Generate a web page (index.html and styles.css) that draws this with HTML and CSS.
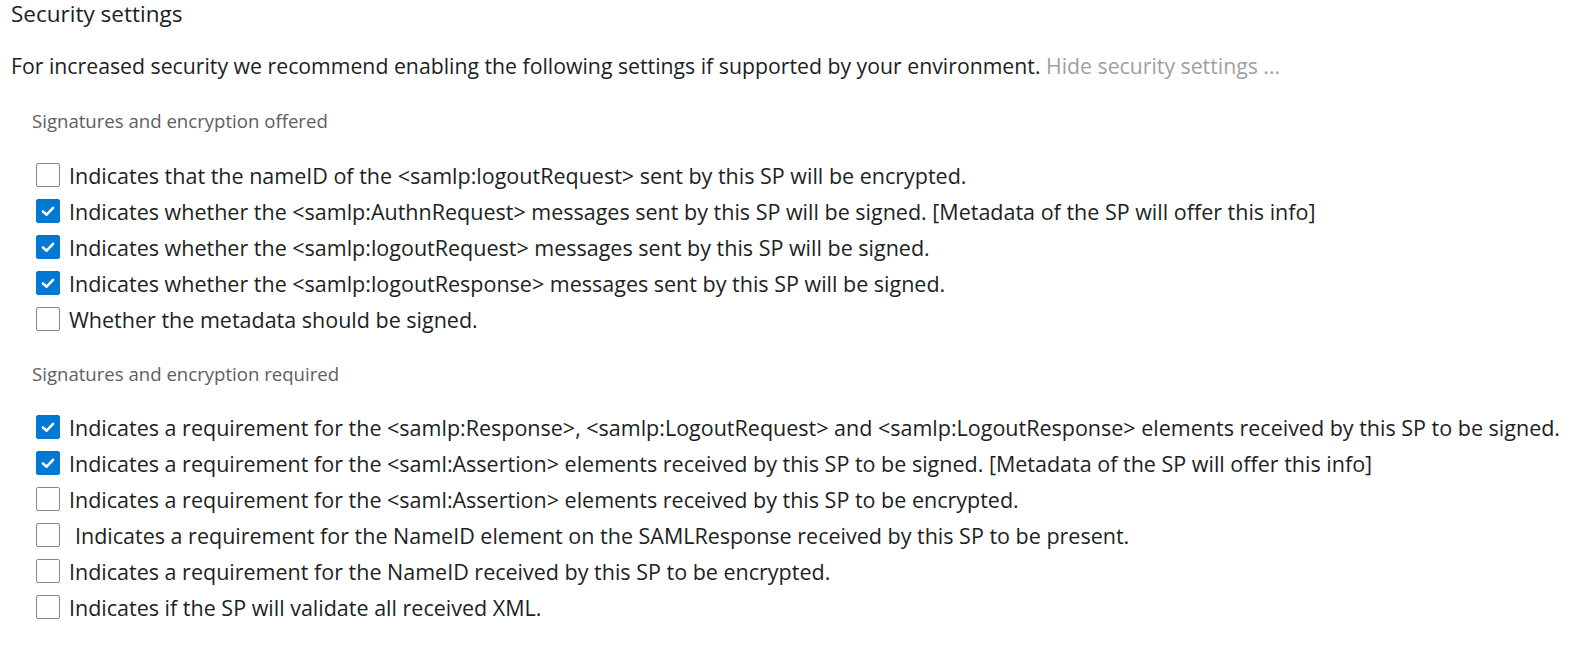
FILE: index.html
```html
<!DOCTYPE html>
<html lang="en">
<head>
    <meta charset="UTF-8">
    <title>Security settings</title>
    <link rel="stylesheet" href="styles.css">
</head>
<body>
    <div class="settings">
        <h2 class="title">Security settings</h2>
        <p class="intro">For increased security we recommend enabling the following settings if supported by your environment. <a href="#" class="toggle">Hide security settings ...</a></p>

        <div class="group">
            <h3 class="group-title">Signatures and encryption offered</h3>
            <label class="row"><span class="box"></span><span class="text">Indicates that the nameID of the &lt;samlp:logoutRequest&gt; sent by this SP will be encrypted.</span></label>
            <label class="row"><span class="box checked"><svg viewBox="0 0 24 24"><polyline points="6.5,12.5 10.5,16 17.5,8.5"/></svg></span><span class="text">Indicates whether the &lt;samlp:AuthnRequest&gt; messages sent by this SP will be signed. [Metadata of the SP will offer this info]</span></label>
            <label class="row"><span class="box checked"><svg viewBox="0 0 24 24"><polyline points="6.5,12.5 10.5,16 17.5,8.5"/></svg></span><span class="text">Indicates whether the &lt;samlp:logoutRequest&gt; messages sent by this SP will be signed.</span></label>
            <label class="row"><span class="box checked"><svg viewBox="0 0 24 24"><polyline points="6.5,12.5 10.5,16 17.5,8.5"/></svg></span><span class="text">Indicates whether the &lt;samlp:logoutResponse&gt; messages sent by this SP will be signed.</span></label>
            <label class="row"><span class="box"></span><span class="text">Whether the metadata should be signed.</span></label>
        </div>

        <div class="group second">
            <h3 class="group-title">Signatures and encryption required</h3>
            <label class="row"><span class="box checked"><svg viewBox="0 0 24 24"><polyline points="6.5,12.5 10.5,16 17.5,8.5"/></svg></span><span class="text">Indicates a requirement for the &lt;samlp:Response&gt;, &lt;samlp:LogoutRequest&gt; and &lt;samlp:LogoutResponse&gt; elements received by this SP to be signed.</span></label>
            <label class="row"><span class="box checked"><svg viewBox="0 0 24 24"><polyline points="6.5,12.5 10.5,16 17.5,8.5"/></svg></span><span class="text">Indicates a requirement for the &lt;saml:Assertion&gt; elements received by this SP to be signed. [Metadata of the SP will offer this info]</span></label>
            <label class="row"><span class="box"></span><span class="text">Indicates a requirement for the &lt;saml:Assertion&gt; elements received by this SP to be encrypted.</span></label>
            <label class="row"><span class="box"></span><span class="text indent">Indicates a requirement for the NameID element on the SAMLResponse received by this SP to be present.</span></label>
            <label class="row"><span class="box"></span><span class="text">Indicates a requirement for the NameID received by this SP to be encrypted.</span></label>
            <label class="row"><span class="box"></span><span class="text">Indicates if the SP will validate all received XML.</span></label>
        </div>
    </div>
</body>
</html>
```

FILE: styles.css
```css
body {
    font-family: "Open Sans", "Noto Sans", sans-serif;
    color: #201f1e;
    background-color: #fff;
    margin: 0;
    padding: 0;
}

.settings {
    padding: 0 11px;
}

.title {
    margin: 0;
    font-size: 22.5px;
    font-weight: normal;
    line-height: 28px;
}

.intro {
    margin: 24px 0 0 0;
    font-size: 21.25px;
    line-height: 28px;
}

.toggle {
    color: #a19f9d;
    text-decoration: none;
}

.group {
    margin-top: 29px;
    padding-left: 21px;
}

.group.second {
    margin-top: 25px;
}

.group-title {
    margin: 0 0 24px 0;
    font-size: 18.6px;
    font-weight: normal;
    line-height: 24px;
    color: #605e5c;
}

.group.second .group-title {
    margin-bottom: 23px;
}

.row {
    display: flex;
    align-items: center;
    height: 36px;
    padding-left: 4px;
    font-size: 21.5px;
}

.box {
    width: 24px;
    height: 24px;
    box-sizing: border-box;
    border: 1px solid #8a8886;
    border-radius: 2px;
    flex-shrink: 0;
    margin-right: 9px;
    display: flex;
}

.box.checked {
    background-color: #0078d4;
    border-color: #0078d4;
}

.box svg {
    width: 100%;
    height: 100%;
    fill: none;
    stroke: #fff;
    stroke-width: 2.8;
    stroke-linecap: round;
    stroke-linejoin: round;
}

.text {
    white-space: nowrap;
}

.text.indent {
    padding-left: 6px;
}
```
